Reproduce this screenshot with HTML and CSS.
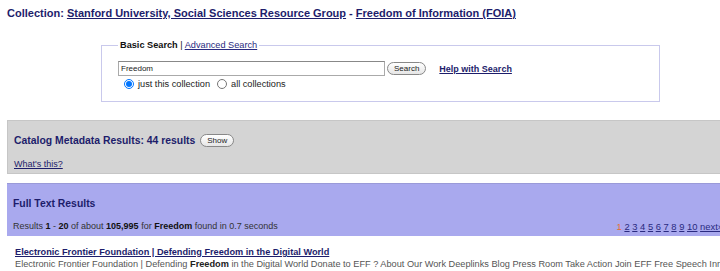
FILE: index.html
```html
<!DOCTYPE html>
<html lang="en">
<head>
    <meta charset="UTF-8">
    <title>Collection search</title>
    <link rel="stylesheet" href="styles.css">
</head>
<body>
    <div class="page">
        <h1 class="collection">Collection: <a href="#">Stanford University, Social Sciences Resource Group</a> - <a href="#">Freedom of Information (FOIA)</a></h1>

        <fieldset class="search">
            <legend><b>Basic Search</b> | <a href="#">Advanced Search</a></legend>
            <div class="search-row">
                <input type="text" class="query" value="Freedom">
                <button class="btn">Search</button>
                <a href="#" class="help">Help with Search</a>
            </div>
            <div class="scope">
                <label><input type="radio" name="scope" checked> just this collection</label>
                <label><input type="radio" name="scope"> all collections</label>
            </div>
        </fieldset>

        <div class="panel catalog">
            <h2>Catalog Metadata Results: 44 results <button class="btn small">Show</button></h2>
            <a href="#" class="whats">What's this?</a>
        </div>

        <div class="panel fulltext">
            <h2>Full Text Results</h2>
            <div class="stats">
                <span>Results <b>1</b> - <b>20</b> of about <b>105,995</b> for <b>Freedom</b> found in 0.7 seconds</span>
                <span class="pages"><span class="current">1</span> <a href="#">2</a> <a href="#">3</a> <a href="#">4</a> <a href="#">5</a> <a href="#">6</a> <a href="#">7</a> <a href="#">8</a> <a href="#">9</a> <a href="#">10</a> <a href="#">next&raquo;</a></span>
            </div>
        </div>

        <div class="result">
            <a href="#" class="title">Electronic Frontier Foundation | Defending Freedom in the Digital World</a>
            <p>Electronic Frontier Foundation | Defending <b>Freedom</b> in the Digital World Donate to EFF ? About Our Work Deeplinks Blog Press Room Take Action Join EFF Free Speech Innovation Privacy</p>
        </div>
    </div>
</body>
</html>
```

FILE: styles.css
```css
html, body{
    overflow: hidden;
}
body{
    margin: 0;
    padding: 0 0 0 7px;
    font-family: "Liberation Sans", Arial, sans-serif;
    font-size: 9px;
    color: #333;
    background: #fff;
}
.page{
    width: 770px;
}
a{
    color: #1d1d6b;
}
.collection{
    margin: 0;
    padding-top: 7px;
    font-size: 11px;
    color: #1d1d6b;
    line-height: 13px;
}
.search{
    width: 532px;
    margin: 20px 0 0 94px;
    padding: 0 9px 12px 16px;
    border: 1px solid #c9c9ec;
    border-radius: 0;
}
.search legend{
    padding: 0 2px;
    font-size: 9.2px;
    color: #111;
}
.search legend a{
    color: #2a2a80;
}
.search-row{
    display: flex;
    align-items: center;
    margin-top: 11px;
}
.query{
    width: 261px;
    height: 13px;
    padding: 0 2px;
    border: 1px solid #aaa;
    border-top-color: #888;
    font-family: "Liberation Sans", Arial, sans-serif;
    font-size: 8px;
    color: #222;
}
.btn{
    height: 13px;
    padding: 0 6px;
    margin-left: 2px;
    border: 1px solid #888;
    border-radius: 7px;
    background: linear-gradient(#fff, #e6e6e6);
    font-family: "Liberation Sans", Arial, sans-serif;
    font-size: 8px;
    color: #222;
    line-height: 11px;
}
.help{
    margin-left: 13px;
    font-weight: bold;
    font-size: 9px;
    color: #1d1d6b;
}
.scope{
    display: flex;
    gap: 7px;
    margin: 3px 0 0 6px;
    font-size: 9.2px;
    color: #222;
}
.scope label{
    display: flex;
    align-items: center;
}
.scope input{
    width: 10px;
    height: 10px;
    margin: 0 4px 0 0;
}
.panel{
    padding: 0 6px;
}
.panel h2{
    margin: 0;
    font-size: 10.4px;
    color: #1d1d6b;
}
.catalog{
    margin-top: 18px;
    background: #d4d4d4;
    border: 1px solid #c6c6c6;
    padding-top: 13px;
    height: 39px;
}
.catalog .small{
    vertical-align: 1px;
}
.whats{
    display: block;
    margin-top: 12px;
    font-size: 9px;
}
.fulltext{
    margin-top: 9px;
    background: #a9a9ee;
    border-top: 1px solid #9a9ad8;
    padding-top: 14px;
    height: 38px;
}
.stats{
    display: flex;
    justify-content: space-between;
    margin-top: 12px;
    color: #333;
}
.stats b{
    color: #111;
}
.pages{
    padding-right: 48px;
    font-size: 9.4px;
}
.pages .current{
    color: #e8702a;
}
.pages a{
    color: #2a2a80;
}
.result{
    padding: 11px 8px;
}
.result .title{
    font-weight: bold;
    font-size: 9.2px;
    color: #1d1d6b;
}
.result p{
    margin: 2px 0 0;
    white-space: nowrap;
    color: #555;
    font-size: 9.2px;
}
.result p b{
    color: #222;
}
```
